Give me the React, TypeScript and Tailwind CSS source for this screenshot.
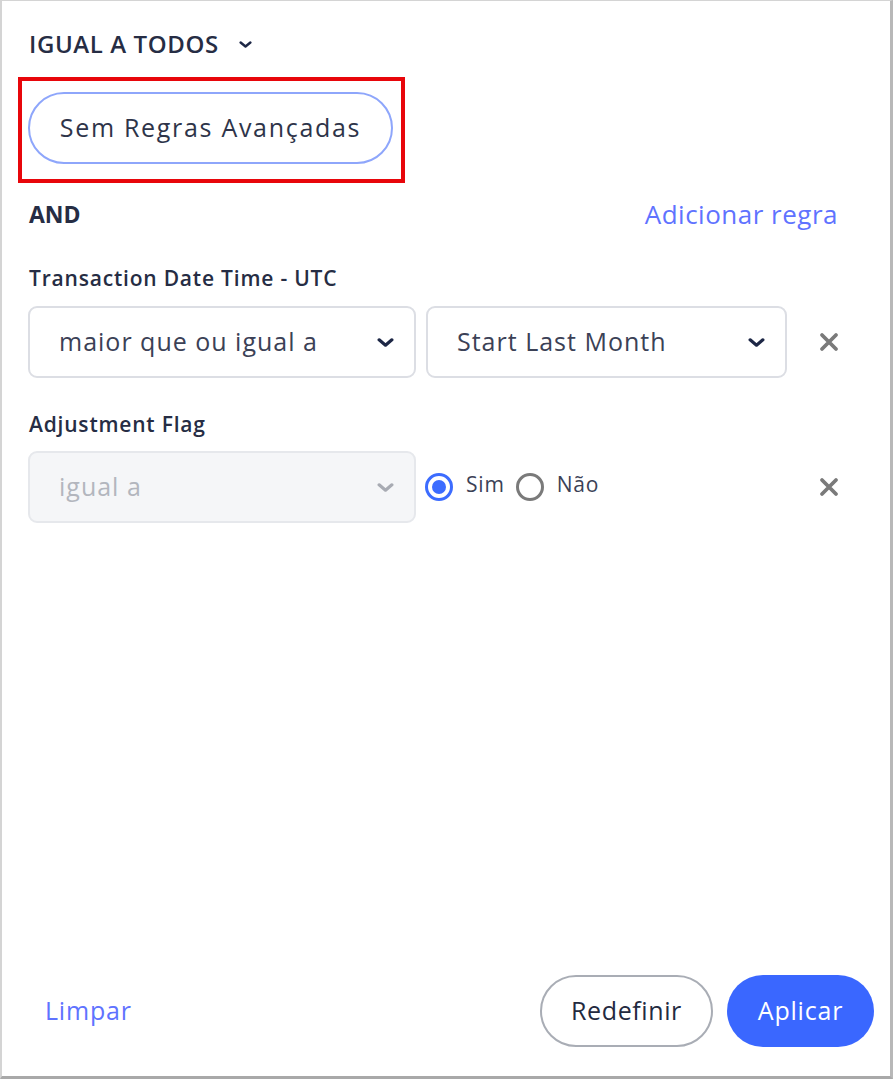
import { useState } from 'react';

const font = { fontFamily: '"Open Sans", "Noto Sans", sans-serif' };

function Chevron({ className = '' }: { className?: string }) {
    return (
        <svg viewBox="0 0 16 8" className={className} fill="none" stroke="currentColor" strokeWidth="3" strokeLinecap="round" strokeLinejoin="round">
            <path d="M2 1.5 L8 6.5 L14 1.5" />
        </svg>
    );
}

function Close() {
    return (
        <button className="w-[54px] flex items-center justify-end pr-[2px] text-[#7a7a7a]">
            <svg viewBox="0 0 20 20" className="w-[20px] h-[20px]" fill="none" stroke="currentColor" strokeWidth="3.8" strokeLinecap="round">
                <path d="M3 3 L17 17 M17 3 L3 17" />
            </svg>
        </button>
    );
}

function Select({ value, width, disabled }: { value: string; width: string; disabled?: boolean }) {
    return (
        <div
            className={`${width} h-[72px] rounded-[9px] border-2 flex items-center justify-between pl-[29px] pr-[20px] ${
                disabled ? 'bg-[#f5f6f8] border-[#e6e8ec] text-[#b3b6be]' : 'bg-white border-[#dcdee4] text-[#3b4156]'
            }`}
        >
            <span className="text-[25px] tracking-[1px]">{value}</span>
            <Chevron className={`w-[17px] h-[9px] ${disabled ? 'text-[#a8abb3]' : 'text-[#1d2746]'}`} />
        </div>
    );
}

export default function App() {
    const [flag, setFlag] = useState(true);

    return (
        <div className="w-[896px] h-[1082px] bg-white" style={font}>
            <div className="w-[893px] h-[1079px] bg-white border-l-2 border-t border-[#d4d4d4] border-r-[3px] border-b-[3px] border-r-[#b8b8b8] border-b-[#a9a9a9] flex flex-col">
                <div className="flex-1 flex flex-col pl-[26px] pr-[49px]">
                    {/* header */}
                    <div className="flex items-center gap-[20px] h-[44px] mt-[21px] px-[1px]">
                        <span className="text-[24px] font-semibold text-[#262d44] tracking-[0.6px]">IGUAL A TODOS</span>
                        <Chevron className="w-[13px] h-[7px] text-[#1d2746]" />
                    </div>

                    {/* advanced rules pill, outlined in red */}
                    <div className="mt-[11px] -ml-[10px] w-[387px] h-[106px] border-4 border-[#e8060b] pl-[6px] pt-[11px]">
                        <button className="w-[365px] h-[72px] rounded-full border-2 border-[#8ea6fb] flex items-center justify-center text-[25px] font-medium text-[#2e3449] tracking-[1.7px]">
                            Sem Regras Avançadas
                        </button>
                    </div>

                    {/* AND row */}
                    <div className="flex items-center justify-between h-[40px] mt-[11px] px-[1px]">
                        <span className="text-[23px] font-bold text-[#262d44]">AND</span>
                        <button className="text-[26px] font-medium text-[#5f73ff] tracking-[0.5px] mr-[2px]">Adicionar regra</button>
                    </div>

                    {/* rule 1 */}
                    <div className="mt-[31px] px-[1px] h-[28px] flex items-center">
                        <span className="text-[21px] font-semibold text-[#262d44] tracking-[0.8px]">Transaction Date Time - UTC</span>
                    </div>
                    <div className="flex items-center mt-[13px]">
                        <Select value="maior que ou igual a" width="w-[388px]" />
                        <div className="w-[10px]" />
                        <Select value="Start Last Month" width="w-[361px]" />
                        <Close />
                    </div>

                    {/* rule 2 */}
                    <div className="mt-[33px] px-[1px] h-[28px] flex items-center">
                        <span className="text-[21px] font-semibold text-[#262d44] tracking-[0.8px]">Adjustment Flag</span>
                    </div>
                    <div className="flex items-center mt-[12px]">
                        <Select value="igual a" width="w-[388px]" disabled />
                        <div className="flex items-center ml-[9px] flex-1 gap-[11px]">
                            <button onClick={() => setFlag(true)} className="flex items-center gap-[13px]">
                                <span className={`w-[28px] h-[28px] rounded-full border-[3px] flex items-center justify-center ${flag ? 'border-[#3c6cff]' : 'border-[#7a7a7a]'}`}>
                                    {flag && <span className="w-[14px] h-[14px] rounded-full bg-[#3c6cff]" />}
                                </span>
                                <span className="text-[21px] text-[#3b4156] tracking-[0.8px] -mt-[4px]">Sim</span>
                            </button>
                            <button onClick={() => setFlag(false)} className="flex items-center gap-[13px]">
                                <span className={`w-[28px] h-[28px] rounded-full border-[3px] flex items-center justify-center ${!flag ? 'border-[#3c6cff]' : 'border-[#7a7a7a]'}`}>
                                    {!flag && <span className="w-[14px] h-[14px] rounded-full bg-[#3c6cff]" />}
                                </span>
                                <span className="text-[21px] text-[#3b4156] tracking-[0.8px] -mt-[4px]">Não</span>
                            </button>
                        </div>
                        <Close />
                    </div>
                </div>

                {/* footer */}
                <div className="flex items-center justify-between pl-[43px] pr-[16px] pb-[29px]">
                    <button className="text-[25px] font-medium text-[#5f73ff] tracking-[0.8px]">Limpar</button>
                    <div className="flex items-center gap-[14px]">
                        <button className="w-[173px] h-[72px] rounded-full border-2 border-[#a9adb5] text-[25px] font-medium text-[#232a3f] tracking-[0.6px]">
                            Redefinir
                        </button>
                        <button className="w-[147px] h-[72px] rounded-full bg-[#3a67ff] text-[25px] font-medium text-white tracking-[0.8px]">
                            Aplicar
                        </button>
                    </div>
                </div>
            </div>
        </div>
    );
}
